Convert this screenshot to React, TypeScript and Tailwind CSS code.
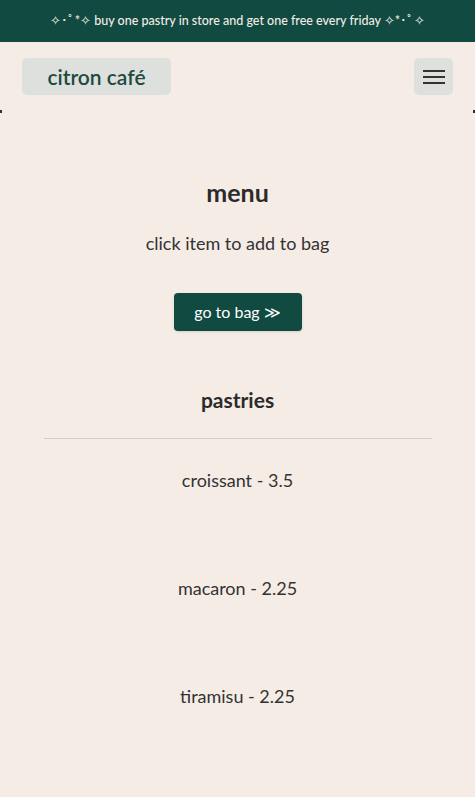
import React from "react";

const items = [
  { name: "croissant", price: "3.5" },
  { name: "macaron", price: "2.25" },
  { name: "tiramisu", price: "2.25" },
];

export default function App() {
  return (
    <div className="min-h-[797px] bg-[#f6ece6] font-['Lato',sans-serif] text-[#333]">
      <div className="flex h-[42px] items-center justify-center bg-[#104a41] text-[12.5px] font-medium text-[#f3ece6]">
        ✧･ﾟ*✧ buy one pastry in store and get one free every friday ✧*･ﾟ✧
      </div>

      <header className="relative flex items-center justify-between px-[22px] pt-4 pb-4">
        <div className="flex h-[37px] w-[149px] items-center justify-center rounded-[5px] bg-[#dde0dd] text-[21px] font-semibold text-[#1d4a41]">
          citron café
        </div>
        <button className="flex h-[37px] w-[39px] flex-col items-center justify-center gap-[4px] rounded-[5px] bg-[#dde0dd]">
          <span className="block h-[2px] w-[22px] bg-[#333]" />
          <span className="block h-[2px] w-[22px] bg-[#333]" />
          <span className="block h-[2px] w-[22px] bg-[#333]" />
        </button>
        <span className="absolute bottom-[-2px] left-0 h-[3px] w-[2px] bg-[#333]" />
        <span className="absolute bottom-[-2px] right-0 h-[3px] w-[2px] bg-[#333]" />
      </header>

      <main className="flex flex-col items-center pt-[63px]">
        <h1 className="text-[25px] font-bold text-[#2b2b2b]">menu</h1>
        <p className="mt-[18px] text-[18px]">click item to add to bag</p>
        <button className="mt-[36px] h-[38px] w-[128px] rounded-[4px] bg-[#104a41] text-[16px] text-white shadow-sm">
          go to bag ≫
        </button>

        <h2 className="mt-[53px] text-[21px] font-bold text-[#2b2b2b]">pastries</h2>
        <hr className="mt-[23px] w-[388px] border-t border-[#cfcfcf]" />
        <ul className="mt-[28px] flex flex-col items-center gap-[81px] text-[18px]">
          {items.map((item) => (
            <li key={item.name}>
              {item.name} - {item.price}
            </li>
          ))}
        </ul>
      </main>
    </div>
  );
}
